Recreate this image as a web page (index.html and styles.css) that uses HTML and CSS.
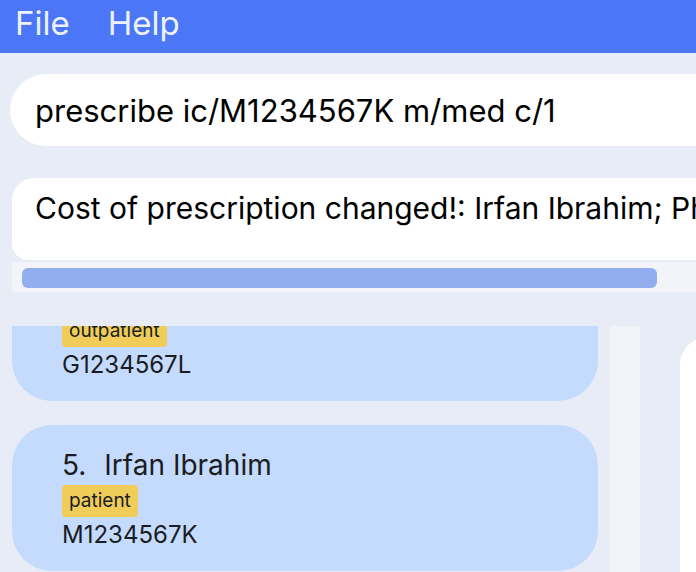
FILE: index.html
```html
<!DOCTYPE html>
<html>
<head>
<meta charset="utf-8">
<link rel="stylesheet" href="styles.css">
</head>
<body>
<div class="menubar">
  <span class="menu-item">File</span>
  <span class="menu-item">Help</span>
</div>
<div class="command">prescribe ic/M1234567K m/med c/1</div>
<div class="result">
  <div class="result-box">Cost of prescription changed!: Irfan Ibrahim; Phone: 98765432</div>
  <div class="hscroll"><div class="thumb"></div></div>
</div>
<div class="lower">
  <div class="list-pane">
    <div class="card card-first">
      <div class="name"><span class="idx">4.</span><span>Alex Yeoh</span></div>
      <span class="tag">outpatient</span>
      <div class="ic">G1234567L</div>
    </div>
    <div class="card">
      <div class="name"><span class="idx">5.</span><span>Irfan Ibrahim</span></div>
      <span class="tag">patient</span>
      <div class="ic">M1234567K</div>
    </div>
  </div>
  <div class="vscroll"></div>
  <div class="right-panel"></div>
</div>
</body>
</html>
```

FILE: styles.css
```css
html, body {
  margin: 0;
  padding: 0;
}
body {
  width: 696px;
  height: 572px;
  overflow: hidden;
  background: #e8ecf6;
  font-family: Inter, "Noto Sans", sans-serif;
  color: #111;
}
.menubar {
  height: 53px;
  background: #4b76f6;
  display: flex;
  align-items: center;
  padding-left: 15px;
  gap: 38px;
}
.menu-item {
  color: #eef2ff;
  font-size: 33px;
  line-height: 1;
  margin-top: -6px;
}
.command {
  margin: 21px -60px 0 10px;
  height: 72px;
  background: #fff;
  border-radius: 36px 0 0 36px;
  display: flex;
  align-items: center;
  padding-left: 25px;
  font-size: 31px;
  white-space: nowrap;
  color: #000;
}
.result {
  margin: 32px -60px 0 12px;
}
.result-box {
  height: 82px;
  background: #fff;
  border-radius: 22px 0 0 16px;
  padding: 12px 0 0 23px;
  box-sizing: border-box;
  font-size: 30px;
  white-space: nowrap;
  overflow: hidden;
  color: #000;
}
.hscroll {
  margin-top: 2px;
  height: 30px;
  background: #f3f4f9;
  padding: 6px 0 0 10px;
  box-sizing: border-box;
}
.thumb {
  width: 635px;
  height: 20px;
  border-radius: 6px;
  background: #92aeee;
}
.lower {
  margin-top: 34px;
  display: flex;
  height: 246px;
}
.list-pane {
  margin-left: 12px;
  width: 586px;
  overflow: hidden;
  display: flex;
  flex-direction: column;
  gap: 24px;
  flex: none;
}
.card {
  flex: none;
  height: 146px;
  box-sizing: border-box;
  border-radius: 40px;
  background: #c4dbfd;
  padding: 23px 0 0 50px;
  display: flex;
  flex-direction: column;
  align-items: flex-start;
  color: #1a1c22;
}
.card-first {
  margin-top: -71px;
}
.name {
  font-size: 28px;
  display: flex;
  gap: 18px;
}
.tag {
  margin-top: 3px;
  background: #f0cd58;
  border-radius: 4px;
  font-size: 19px;
  height: 32px;
  line-height: 32px;
  padding: 0 7px;
  box-sizing: border-box;
}
.ic {
  margin-top: 3px;
  font-size: 24px;
}
.vscroll {
  margin-left: 12px;
  width: 30px;
  background: #f3f4f9;
  flex: none;
}
.right-panel {
  margin: 11px -40px 0 40px;
  flex: 1;
  background: #fff;
  border-radius: 28px 0 0 0;
}
```
